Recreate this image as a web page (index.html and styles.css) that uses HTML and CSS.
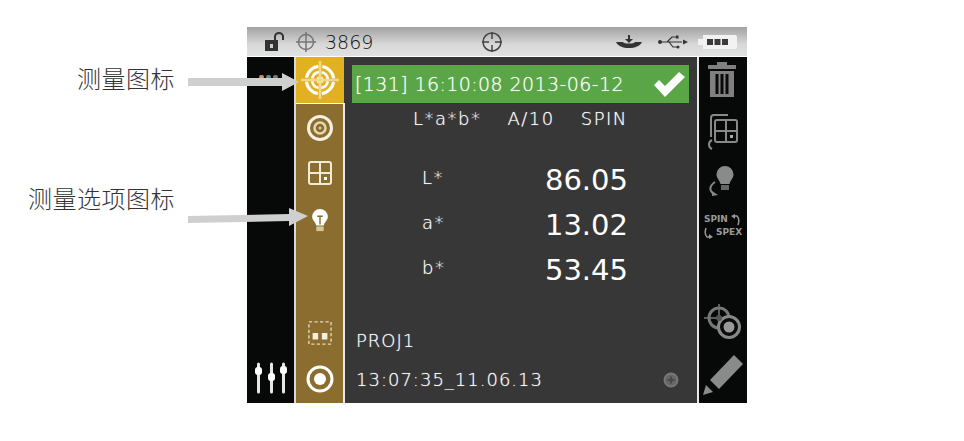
FILE: index.html
```html
<!DOCTYPE html>
<html lang="zh-CN">
<head>
  <meta charset="UTF-8">
  <title>测量图标</title>
  <link rel="stylesheet" href="styles.css">
</head>
<body>
  <div class="page">
    <div class="notes">
      <div class="note">测量图标</div>
      <div class="note">测量选项图标</div>
    </div>

    <div class="screen">
      <div class="topbar">
        <svg class="ico lock" viewBox="0 0 22 20"><rect x="0" y="8" width="13" height="11" fill="#333"/><rect x="5" y="12" width="3" height="4" fill="#ccc"/><path d="M10 8V4.500a4 3.500 0 0 1 8 0V8" fill="none" stroke="#333" stroke-width="2"/></svg>
        <svg class="ico cross" viewBox="0 0 20 20"><g fill="none" stroke="#777" stroke-width="1.500"><circle cx="10" cy="10" r="7.500"/><path d="M10 0V20M0 10H20"/></g></svg>
        <span class="count">3869</span>
        <svg class="ico target" viewBox="0 0 22 22"><g fill="none" stroke="#444" stroke-width="1.500"><circle cx="11" cy="11" r="9"/><path d="M11 1V8M11 14V21M1 11H8M14 11H21"/></g></svg>
        <svg class="ico tray" viewBox="0 0 26 14"><path d="M12 0H14V4H17L13 8L9 4H12Z M0 7H7C8 9 18 9 19 7H26C24 11 19 13 13 13C7 13 2 11 0 7Z" fill="#333"/></svg>
        <svg class="ico usb" viewBox="0 0 30 16"><g fill="none" stroke="#333" stroke-width="1.200"><path d="M3 8H24M9 8L14 3H18M11 8L15 13H19"/></g><path d="M30 8L25 5.500V10.500Z M0 8a2 2 0 1 0 4 0a2 2 0 1 0 -4 0Z M18 1.500H20.500V4.500H18Z M18.500 13a1.500 1.500 0 1 0 3 0a1.500 1.500 0 1 0 -3 0Z" fill="#333"/></svg>
        <svg class="ico batt" viewBox="0 0 40 16"><path d="M1 5H6V1H38A2 2 0 0 1 40 3V13A2 2 0 0 1 38 15H6V11H1Z" fill="#f2f2f2"/><path d="M10 5H16V11H10ZM17.500 5H23.500V11H17.500ZM25 5H31V11H25Z" fill="#3a3a3a"/></svg>
      </div>

      <div class="body">
        <div class="side-left">
          <svg class="dots" viewBox="0 0 24 4"><rect x="0" y="0" width="5" height="4" rx="2" fill="#c8925a"/><rect x="7" y="0" width="5" height="4" rx="2" fill="#5a8a8a"/><rect x="14" y="0" width="5" height="4" rx="2" fill="#777"/></svg>
          <svg class="sliders" viewBox="0 0 36 32"><g stroke="#e6e6e6" stroke-width="3" stroke-linecap="round"><path d="M5.500 2V30M18.500 2V30M30.500 2V30"/></g><rect x="2" y="5" width="7" height="8" rx="3" fill="#fff"/><rect x="15" y="11" width="7" height="8" rx="3" fill="#fff"/><rect x="27" y="4" width="7" height="8" rx="3" fill="#fff"/></svg>
        </div>

        <div class="tabs">
          <div class="tab-active">
            <svg class="ico-36" viewBox="0 0 36 36"><g fill="none" stroke="#fff"><circle cx="18" cy="18" r="13" stroke-width="3" stroke-dasharray="16.400 4" stroke-dashoffset="-2"/><circle cx="18" cy="18" r="7.500" stroke-width="2.500" stroke-dasharray="9.300 2.500" stroke-dashoffset="-1.250"/><circle cx="18" cy="18" r="2.500" stroke-width="1.500"/><path d="M18 0V36M0 18H36" stroke="#f3d98a" stroke-width="2.500"/></g></svg>
          </div>
          <div class="tab-list">
            <svg class="ico-28 first" viewBox="0 0 28 28"><circle cx="14" cy="14" r="11.500" fill="none" stroke="#f6f0de" stroke-width="3"/><circle cx="14" cy="14" r="5.500" fill="none" stroke="#e4d8b4" stroke-width="2.500"/><circle cx="14" cy="14" r="1.500" fill="#d9cba2"/></svg>
            <svg class="ico-24 grid" viewBox="0 0 24 24"><g fill="none" stroke="#f1ead6" stroke-width="2"><rect x="1" y="1" width="22" height="22" rx="2"/><path d="M12 1V23M1 12H23"/></g><rect x="16" y="16" width="3" height="3" fill="#fff"/></svg>
            <svg class="ico-24 bulb" viewBox="0 0 20 26"><path d="M10 1A8.500 8.500 0 0 1 18.500 9.500C18.500 13 15 15 14 19H6C5 15 1.500 13 1.500 9.500A8.500 8.500 0 0 1 10 1Z" fill="#fff"/><path d="M7 9H13M10 9V18" stroke="#8a6d2f" stroke-width="1.500"/><rect x="6" y="20" width="8" height="5" fill="#d4c79e"/></svg>
            <svg class="ico-24 dashed" viewBox="0 0 26 26"><rect x="1" y="1" width="24" height="24" fill="none" stroke="#e4d8b4" stroke-width="1.500" stroke-dasharray="3.500 2.500"/><path d="M5 13H11V20H5ZM15 13H21V20H15Z" fill="#f4efe0"/></svg>
            <svg class="ico-28 dot" viewBox="0 0 28 28"><circle cx="14" cy="14" r="12" fill="none" stroke="#fff" stroke-width="3"/><circle cx="14" cy="14" r="6" fill="#fff"/></svg>
          </div>
        </div>

        <div class="main">
          <div class="banner">
            <span>[131] 16:10:08 2013-06-12</span>
            <svg class="check" viewBox="0 0 32 26"><path d="M1 14L6 9L12 15L26 1L32 6L12 26Z" fill="#fff"/></svg>
          </div>
          <div class="mode">
            <span>L*a*b*</span>
            <span>A/10</span>
            <span>SPIN</span>
          </div>
          <div class="readings">
            <div class="reading"><span class="axis">L*</span><span class="value">86.05</span></div>
            <div class="reading"><span class="axis">a*</span><span class="value">13.02</span></div>
            <div class="reading"><span class="axis">b*</span><span class="value">53.45</span></div>
          </div>
          <div class="project">PROJ1</div>
          <div class="stamp">
            <span>13:07:35_11.06.13</span>
            <svg class="plus" viewBox="0 0 16 16"><circle cx="8" cy="8" r="6.500" fill="#666" stroke="#777" stroke-width="2"/><path d="M8 4.500V11.500M4.500 8H11.500" stroke="#4a4a4a" stroke-width="2"/></svg>
          </div>
        </div>

        <div class="side-right">
          <svg class="trash" viewBox="0 0 28 35"><path d="M9 0H19V3H28V7H0V3H9Z" fill="#808080"/><path d="M2 9H26V35H2Z" fill="#808080"/><path d="M7.500 12H10.500V32H7.500ZM12.500 12H15.500V32H12.500ZM17.500 12H20.500V32H17.500Z" fill="#0a0a0a"/></svg>
          <svg class="swap-grid" viewBox="0 0 32 38"><g fill="none" stroke="#888" stroke-width="2"><path d="M4 24V5A3 3 0 0 1 7 2H21"/><rect x="8" y="7" width="22" height="22" rx="2"/><path d="M19 7V29M8 18H30"/><path d="M5 27C1 29 1 34 5 36"/></g><rect x="23" y="22" width="3" height="3" fill="#aaa"/></svg>
          <svg class="swap-bulb" viewBox="0 0 28 32"><path d="M16 1A8.500 8.500 0 0 1 24.500 9.500C24.500 13 21.500 15 20.500 19H11.500C10.500 15 7.500 13 7.500 9.500A8.500 8.500 0 0 1 16 1Z" fill="#8a8a8a"/><rect x="12" y="20" width="8" height="5" fill="#666"/><path d="M6 17C0 21 0 26 5 29" fill="none" stroke="#888" stroke-width="2"/><path d="M3 26L9 30L3 31Z" fill="#888"/></svg>
          <div class="spin-spex">
            <div class="spin-row">SPIN<svg class="hook" viewBox="0 0 9 12"><path d="M2 2H6C8 4 8 8 7 11" fill="none" stroke="#999" stroke-width="1.500"/><path d="M0 2L4 0V5Z" fill="#999"/></svg></div>
            <div class="spin-row"><svg class="hook" viewBox="0 0 9 12"><path d="M2 1C1 4 1 8 3 10H7" fill="none" stroke="#999" stroke-width="1.500"/><path d="M9 10L5 7V12Z" fill="#999"/></svg>SPEX</div>
          </div>
          <svg class="dual" viewBox="0 0 40 36"><g fill="none" stroke="#777" stroke-width="3"><circle cx="16" cy="14" r="10"/><path d="M16 0V28M1 14H30" stroke-width="1.500"/><circle cx="26" cy="23" r="10.500" fill="#0a0a0a" stroke="#888"/></g><circle cx="16" cy="14" r="3" fill="#555"/><circle cx="26" cy="23" r="5.500" fill="#999"/></svg>
          <svg class="pencil" viewBox="0 0 40 40"><path d="M31 0L40 9L16 34L7 25Z" fill="#8a8a8a"/><path d="M3 30L10 37L0 40Z" fill="#8a8a8a"/></svg>
        </div>
      </div>
    </div>

    <svg class="arrows" viewBox="0 0 964 441">
      <polygon points="188,78 282,78 282,73 299,82 282,91 282,86 188,86"/>
      <polygon points="188,216 289,214 289,208 308,216 289,226 289,221 188,223"/>
    </svg>
  </div>
</body>
</html>
```

FILE: styles.css
```css
body {
  margin: 0;
  background-color: white;
  font-family: "DejaVu Sans", sans-serif;
}

.page {
  position: relative;
  display: flex;
  width: 964px;
  height: 441px;
  padding-top: 27px;
  box-sizing: border-box;
  overflow: hidden;
}

.notes {
  width: 247px;
  padding: 37px 72px 0 0;
  box-sizing: border-box;
  display: flex;
  flex-direction: column;
  align-items: flex-end;
  gap: 92px;
}

.note {
  font-family: "Noto Sans CJK SC", sans-serif;
  font-weight: 300;
  font-size: 24px;
  line-height: 28px;
  letter-spacing: 0.5px;
  color: #333;
}

.screen {
  width: 500px;
  height: 376px;
  display: flex;
  flex-direction: column;
}

.topbar {
  height: 29px;
  border-bottom: 1px solid white;
  background: linear-gradient(#a2a2a2, #d8d8d8 60%, #e2e2e2);
  display: flex;
  align-items: center;
  color: #111;
}

.ico {
  flex: none;
}

.lock {
  width: 22px;
  height: 20px;
  margin-left: 18px;
}

.cross {
  width: 20px;
  height: 20px;
  margin-left: 9px;
}

.count {
  font-size: 19px;
  font-weight: 200;
  margin-left: 9px;
  width: 49px;
}

.target {
  width: 22px;
  height: 22px;
  margin-left: 107px;
}

.tray {
  width: 26px;
  height: 14px;
  margin-left: 113px;
}

.usb {
  width: 30px;
  height: 16px;
  margin-left: 16px;
}

.batt {
  width: 40px;
  height: 16px;
  margin-left: 9px;
}

.body {
  flex: 1;
  display: flex;
  min-height: 0;
}

.side-left {
  width: 47px;
  background-color: #070909;
  border-right: 2px solid #d8d8d8;
  display: flex;
  flex-direction: column;
  justify-content: space-between;
  align-items: center;
  padding: 18px 0 9px;
}

.dots {
  width: 24px;
  height: 4px;
}

.sliders {
  width: 36px;
  height: 32px;
}

.tabs {
  width: 49px;
  display: flex;
  flex-direction: column;
  background-color: #373737;
}

.tab-active {
  height: 46px;
  background-color: #e1b121;
  display: flex;
  align-items: center;
  justify-content: center;
  margin-right: 1px;
}

.ico-36 {
  width: 38px;
  height: 38px;
}

.tab-list {
  flex: 1;
  background-color: #8a6d2f;
  border-top: 1px solid white;
  border-right: 2px solid #e8e8e8;
  display: flex;
  flex-direction: column;
  align-items: center;
}

.ico-28 {
  width: 28px;
  height: 28px;
}

.ico-24 {
  width: 24px;
  height: 24px;
}

.first {
  margin-top: 10px;
}

.grid {
  margin-top: 19px;
}

.bulb {
  margin-top: 23px;
}

.dashed {
  margin-top: 89px;
}

.dot {
  margin-top: 20px;
}

.main {
  flex: 1;
  background-color: #373737;
  border-right: 2px solid #e8e8e8;
  padding: 8px 8px 0 7px;
  color: white;
  font-weight: 200;
  text-shadow: 0 0 1px rgba(255, 255, 255, 0.7);
  display: flex;
  flex-direction: column;
}

.banner {
  height: 38px;
  background-color: #5aa647;
  display: flex;
  align-items: center;
  justify-content: space-between;
  padding: 0 4px 0 3px;
  font-size: 19px;
  letter-spacing: 0.4px;
  color: white;
}

.check {
  width: 32px;
  height: 26px;
}

.mode {
  display: flex;
  margin: 4px 0 0 61px;
  gap: 26px;
  font-size: 18px;
  letter-spacing: 1.5px;
  line-height: 24px;
}

.readings {
  margin-top: 30px;
  display: flex;
  flex-direction: column;
  gap: 8px;
}

.reading {
  height: 37px;
  display: flex;
  align-items: center;
  justify-content: space-between;
  padding: 0 61px 0 70px;
}

.axis {
  font-size: 18px;
  letter-spacing: 1.5px;
  margin-top: -4px;
}

.value {
  font-size: 29px;
  font-weight: 400;
  color: white;
  text-shadow: none;
}

.project {
  margin: 41px 0 0 4px;
  font-size: 18px;
  letter-spacing: 1px;
  line-height: 24px;
}

.stamp {
  margin: 15px 10px 0 4px;
  display: flex;
  align-items: center;
  justify-content: space-between;
  font-size: 18px;
  letter-spacing: 1px;
  line-height: 24px;
}

.plus {
  width: 16px;
  height: 16px;
}

.side-right {
  width: 48px;
  background-color: #070909;
  display: flex;
  flex-direction: column;
  align-items: center;
  color: #999;
}

.trash {
  width: 28px;
  height: 35px;
  margin: 5px 2px 0 0;
}

.swap-grid {
  width: 32px;
  height: 38px;
  margin-top: 16px;
}

.swap-bulb {
  width: 28px;
  height: 32px;
  margin-top: 14px;
}

.spin-spex {
  margin-top: 16px;
  font-size: 9px;
  line-height: 13px;
  font-weight: bold;
  white-space: nowrap;
}

.spin-row {
  display: flex;
  align-items: center;
  gap: 3px;
}

.hook {
  width: 9px;
  height: 12px;
}

.dual {
  width: 40px;
  height: 36px;
  margin-top: 65px;
}

.pencil {
  width: 40px;
  height: 40px;
  margin-top: 15px;
}

.arrows {
  position: absolute;
  left: 0;
  top: 0;
  width: 964px;
  height: 441px;
  fill: #cfcfcf;
}
```
